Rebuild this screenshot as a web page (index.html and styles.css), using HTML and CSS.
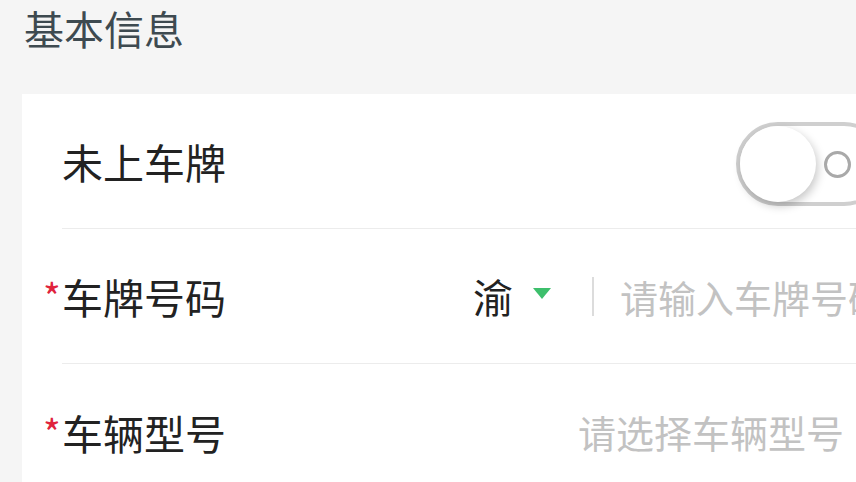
FILE: index.html
```html
<!DOCTYPE html>
<html lang="zh-CN">
  <head>
    <meta charset="UTF-8" />
    <meta name="viewport" content="width=device-width, initial-scale=1.0" />
    <title>基本信息</title>
    <link rel="stylesheet" href="styles.css">
  </head>
  <body>
    <div class="title">基本信息</div>
    <div class="card">
      <div class="row">
        <div class="label">未上车牌</div>
        <div class="switch">
          <div class="knob"></div>
          <div class="off-dot"></div>
        </div>
      </div>
      <div class="row">
        <div class="label"><span class="req">*</span>车牌号码</div>
        <div class="plate">
          <span class="province">渝</span>
          <span class="caret"></span>
          <span class="bar"></span>
          <span class="placeholder">请输入车牌号码</span>
        </div>
      </div>
      <div class="row">
        <div class="label"><span class="req">*</span>车辆型号</div>
        <span class="placeholder select">请选择车辆型号</span>
      </div>
    </div>
  </body>
</html>
```

FILE: styles.css
```css
* {
  margin: 0;
  padding: 0;
  box-sizing: border-box;
}
body {
  background: #f5f5f5;
  font-family: "Noto Sans CJK SC", "Noto Sans", sans-serif;
  overflow: hidden;
}
.title {
  padding-left: 24px;
  height: 56px;
  line-height: 56px;
  font-size: 40px;
  color: #3e4a50;
  margin-bottom: 38px;
}
.card {
  margin-left: 22px;
  background: #fff;
  overflow: hidden;
}
.card .row {
  height: 135px;
  margin-left: 40px;
  padding-right: 12px;
  display: flex;
  align-items: center;
  border-bottom: 1px solid #ececec;
  white-space: nowrap;
}
.card .row:last-child {
  border-bottom: none;
}
.label {
  font-size: 41px;
  color: #222;
  flex-shrink: 0;
}
.req {
  display: inline-block;
  width: 19px;
  margin-left: -19px;
  color: #e0233c;
  font-size: 38px;
  vertical-align: 2px;
}
.switch {
  position: relative;
  margin-left: auto;
  margin-right: -42px;
  margin-top: 6px;
  width: 150px;
  height: 84px;
  border: 4px solid #cfcfcf;
  border-radius: 42px;
  flex-shrink: 0;
}
.switch .knob {
  position: absolute;
  left: 0;
  top: 0;
  width: 76px;
  height: 76px;
  border-radius: 50%;
  background: #fff;
  box-shadow: 2px 4px 10px rgba(0, 0, 0, 0.22);
}
.switch .off-dot {
  position: absolute;
  left: 84px;
  top: 25px;
  width: 27px;
  height: 27px;
  border-radius: 50%;
  border: 3px solid #a9a9a9;
}
.plate {
  margin-left: auto;
  margin-right: -42px;
  display: flex;
  align-items: center;
  flex-shrink: 0;
}
.province {
  font-size: 40px;
  color: #222;
}
.caret {
  margin-left: 20px;
  width: 0;
  height: 0;
  border-left: 9px solid transparent;
  border-right: 9px solid transparent;
  border-top: 11px solid #3dbf6c;
  margin-top: -6px;
}
.bar {
  margin-left: 41px;
  width: 2px;
  height: 39px;
  background: #dcdcdc;
}
.placeholder {
  margin-left: 26px;
  font-size: 38px;
  color: #c2c2c2;
}
.placeholder.select {
  margin-left: auto;
}
```
